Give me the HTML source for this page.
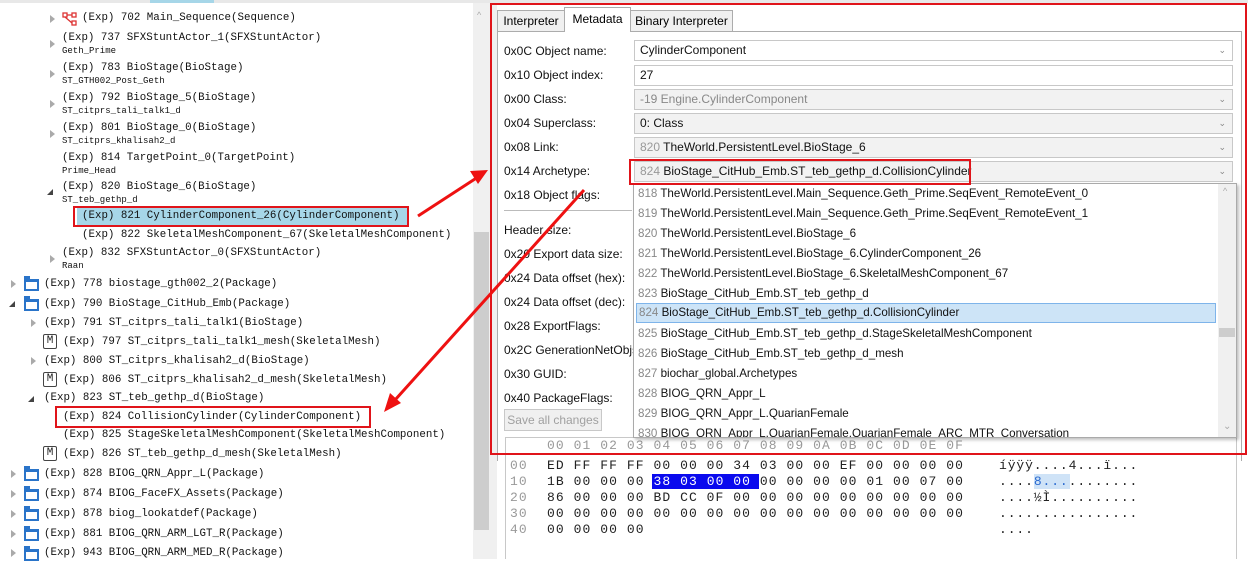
<!DOCTYPE html>
<html><head><meta charset="utf-8"><style>
*{margin:0;padding:0;box-sizing:border-box}
body{width:1248px;height:559px;overflow:hidden;background:#fff;position:relative;font-family:"Liberation Sans",sans-serif}
.a{position:absolute;white-space:nowrap}
pre.a{white-space:pre}
.m{font-family:"Liberation Mono",monospace;font-size:10.8px;color:#111;line-height:13px}
.s{font-family:"Liberation Mono",monospace;font-size:9px;color:#111;line-height:10px}
.tri{position:absolute;width:0;height:0;border-top:4px solid transparent;border-bottom:4px solid transparent;border-left:5px solid #aaa}
.tri2{position:absolute;width:0;height:0;border-left:6px solid transparent;border-bottom:6px solid #444}
.fold{position:absolute;width:15px;height:12px;border:2px solid #2a74c9;border-top-width:3px}
.fold:before{content:"";position:absolute;left:-2px;top:-6px;width:6px;height:3px;background:#2a74c9}
.M{position:absolute;width:14px;height:15px;border:1px solid #444;border-radius:2px;font-family:"Liberation Mono",monospace;font-size:11px;text-align:center;line-height:13px;color:#222}
.lbl{font-size:12px;color:#111;line-height:14px}
.fld{position:absolute;left:634px;width:599px;height:21px;border:1px solid #c8c8c8;background:#f2f2f2;font-size:12px;line-height:19px;padding-left:5px;color:#111;white-space:nowrap}
.fld .n{color:#999}
.chev{position:absolute;right:6px;top:0;color:#888;font-size:9px}
.it{position:absolute;left:636px;width:580px;height:20px;font-size:11.6px;line-height:20px;padding-left:2px;color:#111;white-space:nowrap}
.it .n{color:#888}
.hx{font-family:"Liberation Mono",monospace;font-size:13px;letter-spacing:1.07px;line-height:16px;color:#222}
.red{position:absolute;border:2px solid #e0141a}
.tab{position:absolute;font-size:12px;border:1px solid #acacac;text-align:center;white-space:nowrap}
</style></head><body>

<div class="a" style="left:0;top:0;width:1248px;height:3px;background:#e8e8e8"></div>
<div class="a" style="left:150px;top:0;width:64px;height:3px;background:#a6d6e8"></div>

<div class="tri" style="left:50px;top:15px"></div>
<svg class="a" style="left:62px;top:12px" width="16" height="14" viewBox="0 0 16 14"><rect x="1" y="1" width="4" height="4" fill="none" stroke="#d33" stroke-width="1.3"/><rect x="10" y="1" width="4" height="4" fill="none" stroke="#d33" stroke-width="1.3"/><rect x="10" y="9" width="4" height="4" fill="none" stroke="#d33" stroke-width="1.3"/><path d="M5 3H10M3 5L10 11" stroke="#d33" stroke-width="1.3" fill="none"/></svg>
<div class="a m" style="left:82px;top:12px">(Exp) 702 Main_Sequence(Sequence)</div>

<div class="tri" style="left:50px;top:40px"></div>
<div class="a m" style="left:62px;top:32px">(Exp) 737 SFXStuntActor_1(SFXStuntActor)</div>
<div class="a s" style="left:62px;top:46px">Geth_Prime</div>
<div class="tri" style="left:50px;top:70px"></div>
<div class="a m" style="left:62px;top:62px">(Exp) 783 BioStage(BioStage)</div>
<div class="a s" style="left:62px;top:76px">ST_GTH002_Post_Geth</div>
<div class="tri" style="left:50px;top:100px"></div>
<div class="a m" style="left:62px;top:92px">(Exp) 792 BioStage_5(BioStage)</div>
<div class="a s" style="left:62px;top:106px">ST_citprs_tali_talk1_d</div>
<div class="tri" style="left:50px;top:130px"></div>
<div class="a m" style="left:62px;top:122px">(Exp) 801 BioStage_0(BioStage)</div>
<div class="a s" style="left:62px;top:136px">ST_citprs_khalisah2_d</div>
<div class="a m" style="left:62px;top:152px">(Exp) 814 TargetPoint_0(TargetPoint)</div>
<div class="a s" style="left:62px;top:166px">Prime_Head</div>
<div class="tri2" style="left:47px;top:189px"></div>
<div class="a m" style="left:62px;top:181px">(Exp) 820 BioStage_6(BioStage)</div>
<div class="a s" style="left:62px;top:195px">ST_teb_gethp_d</div>
<div class="a" style="left:77px;top:207px;width:330px;height:18px;background:#a6d6e8"></div>
<div class="a m" style="left:82px;top:210px">(Exp) 821 CylinderComponent_26(CylinderComponent)</div>
<div class="a m" style="left:82px;top:229px">(Exp) 822 SkeletalMeshComponent_67(SkeletalMeshComponent)</div>
<div class="tri" style="left:50px;top:255px"></div>
<div class="a m" style="left:62px;top:247px">(Exp) 832 SFXStuntActor_0(SFXStuntActor)</div>
<div class="a s" style="left:62px;top:261px">Raan</div>

<div class="tri" style="left:11px;top:280px"></div><div class="fold" style="left:24px;top:279px"></div>
<div class="a m" style="left:44px;top:278px">(Exp) 778 biostage_gth002_2(Package)</div>
<div class="tri2" style="left:9px;top:301px"></div><div class="fold" style="left:24px;top:299px"></div>
<div class="a m" style="left:44px;top:298px">(Exp) 790 BioStage_CitHub_Emb(Package)</div>
<div class="tri" style="left:31px;top:319px"></div>
<div class="a m" style="left:44px;top:317px">(Exp) 791 ST_citprs_tali_talk1(BioStage)</div>
<div class="M" style="left:43px;top:334px">M</div>
<div class="a m" style="left:63px;top:336px">(Exp) 797 ST_citprs_tali_talk1_mesh(SkeletalMesh)</div>
<div class="tri" style="left:31px;top:357px"></div>
<div class="a m" style="left:44px;top:355px">(Exp) 800 ST_citprs_khalisah2_d(BioStage)</div>
<div class="M" style="left:43px;top:372px">M</div>
<div class="a m" style="left:63px;top:374px">(Exp) 806 ST_citprs_khalisah2_d_mesh(SkeletalMesh)</div>
<div class="tri2" style="left:28px;top:396px"></div>
<div class="a m" style="left:44px;top:392px">(Exp) 823 ST_teb_gethp_d(BioStage)</div>
<div class="a m" style="left:63px;top:411px">(Exp) 824 CollisionCylinder(CylinderComponent)</div>
<div class="a m" style="left:63px;top:429px">(Exp) 825 StageSkeletalMeshComponent(SkeletalMeshComponent)</div>
<div class="M" style="left:43px;top:446px">M</div>
<div class="a m" style="left:63px;top:448px">(Exp) 826 ST_teb_gethp_d_mesh(SkeletalMesh)</div>
<div class="tri" style="left:11px;top:470px"></div><div class="fold" style="left:24px;top:469px"></div>
<div class="a m" style="left:44px;top:468px">(Exp) 828 BIOG_QRN_Appr_L(Package)</div>
<div class="tri" style="left:11px;top:490px"></div><div class="fold" style="left:24px;top:489px"></div>
<div class="a m" style="left:44px;top:488px">(Exp) 874 BIOG_FaceFX_Assets(Package)</div>
<div class="tri" style="left:11px;top:510px"></div><div class="fold" style="left:24px;top:509px"></div>
<div class="a m" style="left:44px;top:508px">(Exp) 878 biog_lookatdef(Package)</div>
<div class="tri" style="left:11px;top:530px"></div><div class="fold" style="left:24px;top:529px"></div>
<div class="a m" style="left:44px;top:528px">(Exp) 881 BIOG_QRN_ARM_LGT_R(Package)</div>
<div class="tri" style="left:11px;top:549px"></div><div class="fold" style="left:24px;top:549px"></div>
<div class="a m" style="left:44px;top:547px">(Exp) 943 BIOG_QRN_ARM_MED_R(Package)</div>

<div class="a" style="left:473px;top:3px;width:17px;height:556px;background:#f0f0f0"></div>
<div class="a" style="left:474px;top:232px;width:15px;height:298px;background:#cdcdcd"></div>
<div class="a" style="left:477px;top:10px;color:#aaa;font-size:9px">^</div>
<div class="a" style="left:490px;top:3px;width:7px;height:556px;background:#f0f0f0"></div>

<div class="tab" style="left:497px;top:10px;width:68px;height:22px;background:#f0f0f0;line-height:20px">Interpreter</div>
<div class="tab" style="left:564px;top:7px;width:67px;height:25px;background:#fff;border-bottom:none;line-height:22px;z-index:2">Metadata</div>
<div class="tab" style="left:630px;top:10px;width:103px;height:22px;background:#f0f0f0;line-height:20px">Binary Interpreter</div>
<div class="a" style="left:497px;top:31px;width:745px;height:430px;border-top:1px solid #acacac;border-left:1px solid #acacac;border-right:1px solid #acacac"></div>

<div class="a lbl" style="left:504px;top:44px">0x0C Object name:</div>
<div class="a lbl" style="left:504px;top:68px">0x10 Object index:</div>
<div class="a lbl" style="left:504px;top:92px">0x00 Class:</div>
<div class="a lbl" style="left:504px;top:116px">0x04 Superclass:</div>
<div class="a lbl" style="left:504px;top:140px">0x08 Link:</div>
<div class="a lbl" style="left:504px;top:164px">0x14 Archetype:</div>
<div class="a lbl" style="left:504px;top:188px">0x18 Object flags:</div>
<div class="a" style="left:504px;top:210px;width:128px;height:1px;background:#bbb"></div>
<div class="a lbl" style="left:504px;top:223px">Header size:</div>
<div class="a lbl" style="left:504px;top:247px">0x20 Export data size:</div>
<div class="a lbl" style="left:504px;top:271px">0x24 Data offset (hex):</div>
<div class="a lbl" style="left:504px;top:295px">0x24 Data offset (dec):</div>
<div class="a lbl" style="left:504px;top:319px">0x28 ExportFlags:</div>
<div class="a lbl" style="left:504px;top:343px">0x2C GenerationNetObjs</div>
<div class="a lbl" style="left:504px;top:367px">0x30 GUID:</div>
<div class="a lbl" style="left:504px;top:391px">0x40 PackageFlags:</div>
<div class="a" style="left:504px;top:409px;width:98px;height:22px;background:#f0f0f0;border:1px solid #c8c8c8;color:#a0a0a0;font-size:12px;line-height:20px;text-align:center">Save all changes</div>

<div class="fld" style="top:40px;background:#fff">CylinderComponent<span class="chev">&#8964;</span></div>
<div class="fld" style="top:65px;background:#fff">27</div>
<div class="fld" style="top:89px;color:#888">-19 Engine.CylinderComponent<span class="chev">&#8964;</span></div>
<div class="fld" style="top:113px">0: Class<span class="chev">&#8964;</span></div>
<div class="fld" style="top:137px"><span class="n">820</span> TheWorld.PersistentLevel.BioStage_6<span class="chev">&#8964;</span></div>
<div class="fld" style="top:161px"><span class="n">824</span> BioStage_CitHub_Emb.ST_teb_gethp_d.CollisionCylinder<span class="chev">&#8964;</span></div>

<div class="a" style="left:505px;top:437px;width:732px;height:122px;border:1px solid #c8c8c8;border-bottom:none"></div>
<pre class="a hx" style="left:547px;top:438px;color:#999">00 01 02 03 04 05 06 07 08 09 0A 0B 0C 0D 0E 0F</pre>
<div class="a" style="left:652px;top:474px;width:107px;height:15px;background:#0a0aee"></div>
<div class="a" style="left:1034px;top:474px;width:36px;height:15px;background:#cfe3f7"></div>
<pre class="a hx" style="left:510px;top:458px;color:#999">00
10
20
30
40</pre>
<pre class="a hx" style="left:547px;top:458px">ED FF FF FF 00 00 00 34 03 00 00 EF 00 00 00 00
1B 00 00 00 <span style="color:#fff">38 03 00 00</span> 00 00 00 00 01 00 07 00
86 00 00 00 BD CC 0F 00 00 00 00 00 00 00 00 00
00 00 00 00 00 00 00 00 00 00 00 00 00 00 00 00
00 00 00 00</pre>
<pre class="a hx" style="left:999px;top:458px;letter-spacing:0.9px">íÿÿÿ....4...ï...
....<span style="color:#2a6ad0">8...</span>........
....½Ì..........
................
....</pre>

<div class="a" style="left:633px;top:183px;width:604px;height:255px;background:#fff;border:1px solid #aaa;box-shadow:2px 2px 3px rgba(0,0,0,.25);overflow:hidden"></div>
<div class="it" style="top:184px"><span class="n">818</span> TheWorld.PersistentLevel.Main_Sequence.Geth_Prime.SeqEvent_RemoteEvent_0</div>
<div class="it" style="top:204px"><span class="n">819</span> TheWorld.PersistentLevel.Main_Sequence.Geth_Prime.SeqEvent_RemoteEvent_1</div>
<div class="it" style="top:224px"><span class="n">820</span> TheWorld.PersistentLevel.BioStage_6</div>
<div class="it" style="top:244px"><span class="n">821</span> TheWorld.PersistentLevel.BioStage_6.CylinderComponent_26</div>
<div class="it" style="top:264px"><span class="n">822</span> TheWorld.PersistentLevel.BioStage_6.SkeletalMeshComponent_67</div>
<div class="it" style="top:284px"><span class="n">823</span> BioStage_CitHub_Emb.ST_teb_gethp_d</div>
<div class="it" style="top:303px;background:#cde4f7;border:1px solid #7eb4ea;line-height:18px"><span class="n">824</span> BioStage_CitHub_Emb.ST_teb_gethp_d.CollisionCylinder</div>
<div class="it" style="top:324px"><span class="n">825</span> BioStage_CitHub_Emb.ST_teb_gethp_d.StageSkeletalMeshComponent</div>
<div class="it" style="top:344px"><span class="n">826</span> BioStage_CitHub_Emb.ST_teb_gethp_d_mesh</div>
<div class="it" style="top:364px"><span class="n">827</span> biochar_global.Archetypes</div>
<div class="it" style="top:384px"><span class="n">828</span> BIOG_QRN_Appr_L</div>
<div class="it" style="top:404px"><span class="n">829</span> BIOG_QRN_Appr_L.QuarianFemale</div>
<div class="it" style="top:424px;height:13px;overflow:hidden"><span class="n">830</span> BIOG_QRN_Appr_L.QuarianFemale.QuarianFemale_ARC_MTR_Conversation</div>
<div class="a" style="left:1218px;top:184px;width:18px;height:253px;background:#f0f0f0"></div>
<div class="a" style="left:1219px;top:328px;width:16px;height:9px;background:#cdcdcd"></div>
<div class="a" style="left:1223px;top:186px;color:#aaa;font-size:9px">^</div>
<div class="a" style="left:1223px;top:421px;color:#aaa;font-size:10px">&#8964;</div>

<div class="red" style="left:490px;top:3px;width:757px;height:452px"></div>
<div class="red" style="left:73px;top:206px;width:336px;height:21px"></div>
<div class="red" style="left:55px;top:406px;width:316px;height:22px"></div>
<div class="red" style="left:629px;top:159px;width:342px;height:26px"></div>

<svg class="a" style="left:0;top:0" width="1248" height="559">
<line x1="418" y1="216" x2="478" y2="177" stroke="#ee1111" stroke-width="3"/>
<polygon points="488,170 470,171 478,184" fill="#ee1111"/>
<line x1="584" y1="190" x2="395" y2="400" stroke="#ee1111" stroke-width="3"/>
<polygon points="384,412 390,393 401,403" fill="#ee1111"/>
</svg>
</body></html>
